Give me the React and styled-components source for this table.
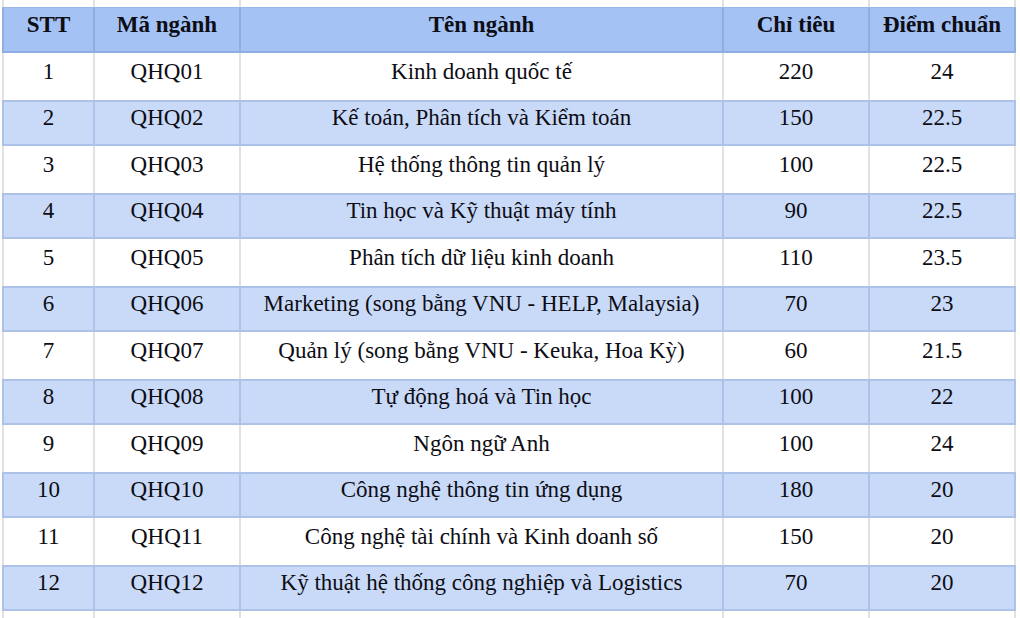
import React from "react";
import styled, { createGlobalStyle, css } from "styled-components";

const GlobalStyle = createGlobalStyle`
  html, body { margin: 0; padding: 0; background: #ffffff; }
  body { font-family: "Liberation Serif", "Times New Roman", serif; color: #0d0d14; }
`;

const Sheet = styled.div`
  width: 1020px;
  height: 618px;
  overflow: hidden;
  padding-left: 2px;
  box-sizing: border-box;
  background: #fff;
`;

const variants = {
  blank: css`
    background: #ffffff;
    --line: #e2e2e2;
  `,
  head: css`
    background: #a4c2f4;
    --line: #8fade2;
    border-top: 1px solid #9ab6e6;
    border-bottom: 2px solid #8fade2;
    font-weight: bold;
  `,
  white: css`
    background: #ffffff;
    --line: #e2e2e2;
  `,
  blue: css`
    background: #c9daf8;
    --line: #adc2e8;
    border-top: 2px solid #adc2e8;
    border-bottom: 2px solid #adc2e8;
  `,
};

const Row = styled.div`
  display: grid;
  grid-template-columns: 93px 146px 483px 146px 146px;
  width: 1014px;
  box-sizing: border-box;
  height: ${(p) => p.$h}px;
  font-size: 23px;
  ${(p) => variants[p.$kind]}
`;

const Cell = styled.div`
  box-sizing: border-box;
  display: flex;
  align-items: center;
  justify-content: center;
  border-right: 2px solid var(--line);
  padding-bottom: ${(p) => p.$pb}px;
  white-space: nowrap;
  &:first-child { border-left: 2px solid var(--line); }
`;

const header = ["STT", "Mã ngành", "Tên ngành", "Chỉ tiêu", "Điểm chuẩn"];

const data = [
  ["1", "QHQ01", "Kinh doanh quốc tế", "220", "24"],
  ["2", "QHQ02", "Kế toán, Phân tích và Kiểm toán", "150", "22.5"],
  ["3", "QHQ03", "Hệ thống thông tin quản lý", "100", "22.5"],
  ["4", "QHQ04", "Tin học và Kỹ thuật máy tính", "90", "22.5"],
  ["5", "QHQ05", "Phân tích dữ liệu kinh doanh", "110", "23.5"],
  ["6", "QHQ06", "Marketing (song bằng VNU - HELP, Malaysia)", "70", "23"],
  ["7", "QHQ07", "Quản lý (song bằng VNU - Keuka, Hoa Kỳ)", "60", "21.5"],
  ["8", "QHQ08", "Tự động hoá và Tin học", "100", "22"],
  ["9", "QHQ09", "Ngôn ngữ Anh", "100", "24"],
  ["10", "QHQ10", "Công nghệ thông tin ứng dụng", "180", "20"],
  ["11", "QHQ11", "Công nghệ tài chính và Kinh doanh số", "150", "20"],
  ["12", "QHQ12", "Kỹ thuật hệ thống công nghiệp và Logistics", "70", "20"],
];

const EmptyRow = ({ h }) => (
  <Row $kind="blank" $h={h}>
    {header.map((_, i) => (
      <Cell key={i} $pb={0} />
    ))}
  </Row>
);

export default function App() {
  return (
    <>
      <GlobalStyle />
      <Sheet>
        <EmptyRow h={7} />
        <Row $kind="head" $h={46}>
          {header.map((t) => (
            <Cell key={t} $pb={10}>{t}</Cell>
          ))}
        </Row>
        {data.map((r, i) => (
          <Row key={r[0]} $kind={i % 2 === 0 ? "white" : "blue"} $h={i % 2 === 0 ? 47 : 46}>
            {r.map((v, j) => (
              <Cell key={j} $pb={10}>{v}</Cell>
            ))}
          </Row>
        ))}
        <EmptyRow h={20} />
      </Sheet>
    </>
  );
}
